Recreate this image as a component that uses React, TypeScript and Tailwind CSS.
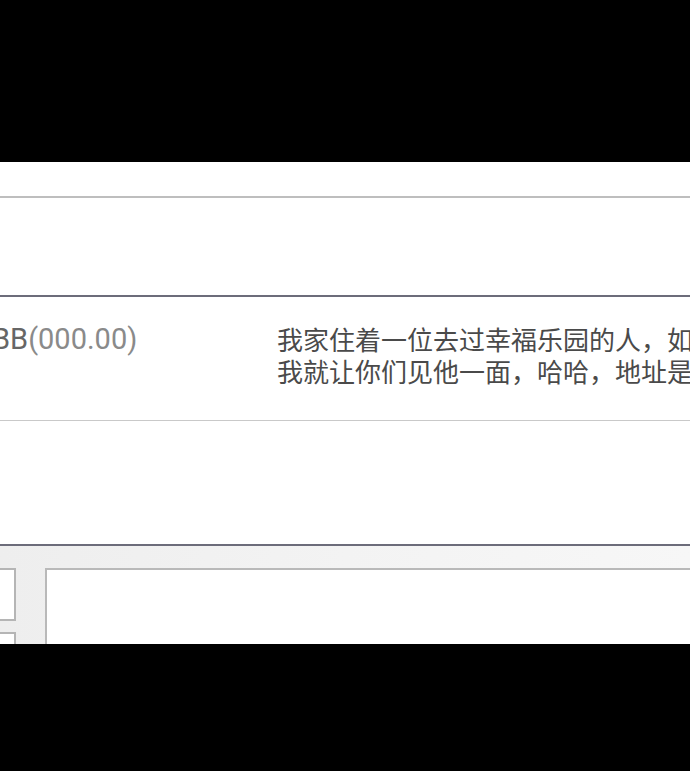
export default function App() {
  return (
    <div className="flex h-[771px] w-[690px] flex-col overflow-hidden bg-black">
      <div className="h-[162px] shrink-0 bg-black" />

      <div className="flex h-[482px] shrink-0 flex-col overflow-hidden bg-white">
        {/* header strip */}
        <div className="h-[36px] shrink-0 border-b-2 border-[#bebebe] bg-white" />

        {/* empty row */}
        <div className="h-[99px] shrink-0 border-b-2 border-[#6c6c7a] bg-white" />

        {/* item row */}
        <div className="flex h-[124px] shrink-0 border-b border-[#c9c9c9] bg-white pt-[26px]">
          <div className="w-[277px] shrink-0 overflow-hidden pt-[1px]">
            <div className="-ml-[8px] whitespace-nowrap font-['Roboto',sans-serif] text-[29px] leading-[30px] text-[#666]">
              BB<span className="text-[#8a8a8a]">(000.00)</span>
            </div>
          </div>
          <div className="flex min-w-0 flex-1 flex-col overflow-hidden font-['Noto_Sans_CJK_SC','Noto_Sans',sans-serif] text-[26px] leading-[32px] text-[#4a4a4a]">
            <div className="h-[32px] whitespace-nowrap">我家住着一位去过幸福乐园的人，如</div>
            <div className="h-[32px] whitespace-nowrap">我就让你们见他一面，哈哈，地址是</div>
          </div>
        </div>

        {/* empty row */}
        <div className="h-[125px] shrink-0 border-b-2 border-[#6c6c7a] bg-white" />

        {/* lower panel */}
        <div className="flex flex-1 bg-gradient-to-r from-[#eeeeee] via-[#f3f3f3] to-[#f7f7f7] pt-[22px]">
          <div className="flex w-[16px] shrink-0 flex-col gap-[11px]">
            <div className="h-[53px] border-y-2 border-r-2 border-[#b5b5b5] bg-white" />
            <div className="h-[53px] border-y-2 border-r-2 border-[#b5b5b5] bg-white" />
          </div>
          <div className="ml-[29px] flex-1 border-l-2 border-t-2 border-[#b9b9b9] bg-white" />
        </div>
      </div>

      <div className="flex-1 bg-black" />
    </div>
  );
}
